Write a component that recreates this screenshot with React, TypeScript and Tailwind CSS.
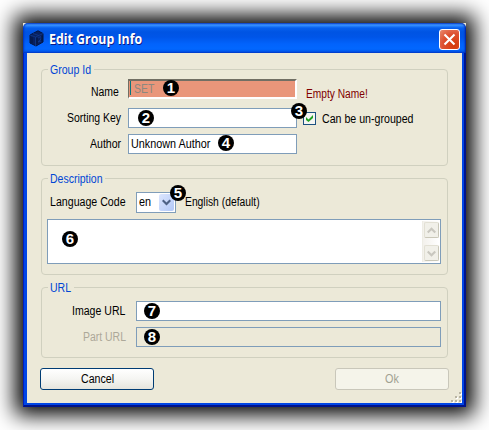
import type { ReactNode } from "react";

function T({ box, fit, children }: { box: string; fit: string; children: ReactNode }) {
  return (
    <span className={`block shrink-0 whitespace-nowrap ${box}`}>
      <span className={`inline-block origin-left whitespace-pre ${fit}`}>{children}</span>
    </span>
  );
}

function Group({ size, legend, legendBox, fit, children }: { size: string; legend: string; legendBox: string; fit: string; children: ReactNode }) {
  return (
    <section className={`relative w-[407px] rounded-[4px] border border-[#d0d0bf] ${size}`}>
      <h2 className={`absolute -top-[8px] left-[6px] h-4 bg-[#ece9d8] pl-[2px] leading-4 text-[#0046d5] ${legendBox}`}>
        <T box="w-0" fit={fit}>{legend}</T>
      </h2>
      {children}
    </section>
  );
}

function Badge({ n, at }: { n: number; at: string }) {
  return (
    <span className={`absolute flex size-4 items-center justify-center rounded-full bg-black text-[15px] leading-4 font-bold text-white ${at}`}>
      {n}
    </span>
  );
}

function Arrow({ up = false }: { up?: boolean }) {
  return (
    <span className="flex h-[16px] w-[15px] items-center justify-center rounded-[2px] border border-[#e2e0d4] border-r-[#c9c7b8] border-b-[#c9c7b8] bg-[#f1f0e9]">
      <svg width="9" height="7" viewBox="0 0 9 7" fill="none" stroke="#c9c7bf" strokeWidth="2.2">
        <path d={up ? "M.7 5.5 4.5 1.7 8.3 5.5" : "M.7 1.5 4.5 5.3 8.3 1.5"} />
      </svg>
    </span>
  );
}

export default function App() {
  return (
    <div className="h-[430px] w-[489px] overflow-hidden bg-white pt-[23px] pl-[23px] font-['Liberation_Sans',Arial,sans-serif] text-[12px] leading-5 text-black">
      <div className="relative h-[384px] w-[443px] bg-[linear-gradient(#ece9d8_6px,#0046e6_6px)] shadow-[0_0_20px_8px_#000]">
        <header className="flex h-[30px] items-center rounded-t-[5px] bg-[linear-gradient(#0a3fc6_0px,#3b94ff_2px,#2882fb_3px,#0660ee_5px,#0054e3_9px,#0055e8_14px,#0263fc_21px,#0267ff_26px,#005af0_28px,#003cc8_30px)] pl-[6px] shadow-[inset_2px_0_2px_-1px_#0031c0,inset_-2px_0_2px_-1px_#001b9a]">
          <svg width="15" height="17" viewBox="0 0 15 17" fill="#08205f" stroke="#03143f" strokeWidth="1">
            <path d="M1 5 9 .8 14 3.5V12L7 16 1 13Z" />
            <path d="M1 5 6.5 7 14 3.5M6.5 7V16M4 3.5 10 5.5M9 8 12 6.5 12 9 9 12 12 11" stroke="#103a8c" strokeWidth=".8" />
            <path d="M3 7v6M8 8v6M13 6v5" />
          </svg>
          <h1 className="ml-[5px] h-6 w-[110px] pt-[3px] font-['Open_Sans',sans-serif] text-[13.5px] leading-5 font-bold text-white [text-shadow:1px_1px_0_#0a1883]">
            <T box="w-full" fit="scale-x-[.915]">Edit Group Info</T>
          </h1>
          <button className="mt-[2px] mr-[6px] ml-auto flex size-[21px] items-center justify-center rounded-[3px] border border-white bg-[radial-gradient(circle_at_75%_80%,#d63a08,#dd5030_55%,#e98a70)]">
            <svg width="13" height="13" viewBox="0 0 13 13" stroke="#fff" strokeWidth="2.1">
              <path d="M1.5 1.5 11.5 11.5M11.5 1.5 1.5 11.5" />
            </svg>
          </button>
        </header>
        <div className="h-[354px] border-r-2 border-b-2 border-l border-[#00138c] border-l-[#001ec0] bg-[#0046e6] pl-[3px]">
          <main className="h-[350px] w-[435px] bg-[#ece9d8] pt-[16px] pl-[14px]">
            <Group size="h-[97px] pt-[9px]" legend="Group Id" legendBox="w-[46px]" fit="scale-x-[.88]">
              <div className="flex h-5">
                <div className="flex w-[86px] justify-end pt-[3px] pr-[9px]"><T box="w-[28px]" fit="scale-x-[.87]">Name</T></div>
                <div className="h-5 w-[169px] border border-t-2 border-r-2 border-b-2 border-[#716f64] border-r-white border-b-white bg-[#e9967a] pl-px text-[#8b8880]">
                  <div className="h-[14px] border-l border-[#08757c] pl-[3px] leading-[16px]"><T box="w-[20px]" fit="scale-x-[.87]">SET</T></div>
                </div>
                <div className="pt-[5px] pl-[9px] text-[#800000]"><T box="w-[62px]" fit="scale-x-[.85]">Empty Name!</T></div>
              </div>
              <div className="mt-[9px] flex h-5">
                <div className="flex w-[86px] justify-end pr-[7px]"><T box="w-[54px]" fit="scale-x-[.87]">Sorting Key</T></div>
                <div className="h-5 w-[169px] border border-[#7f9db9] bg-white" />
                <div className="mt-[4px] ml-[6px] flex size-[13px] items-center justify-center border border-[#1c5180] bg-[#f5f5f2]">
                  <svg width="7" height="7" viewBox="0 0 7 7" fill="#21a121"><path d="M0 2 2.5 4.5 7 0V3L2.5 7 0 5Z" /></svg>
                </div>
                <div className="pt-px pl-[6px]"><T box="w-[92px]" fit="scale-x-[.885]">Can be un-grouped</T></div>
              </div>
              <div className="mt-[6px] flex h-5">
                <div className="flex w-[86px] justify-end pr-[7px]"><T box="w-[31px]" fit="scale-x-[.88]">Author</T></div>
                <div className="h-5 w-[169px] border border-[#7f9db9] bg-white pl-[2px] leading-[18px]"><T box="w-[80px]" fit="scale-x-[.9]">Unknown Author</T></div>
              </div>
            </Group>

            <Group size="mt-[12px] h-[97px] pt-[13px]" legend="Description" legendBox="w-[57px]" fit="scale-x-[.875]">
              <div className="flex h-[21px]">
                <div className="flex w-[94px] justify-end pr-[10px]"><T box="w-[76px]" fit="scale-x-[.885]">Language Code</T></div>
                <div className="flex h-[21px] w-[40px] justify-between border border-[#7f9db9] bg-white pr-px pl-[2px] leading-[19px]">
                  <T box="w-[12px]" fit="scale-x-[.9]">en</T>
                  <span className="mt-px flex h-[17px] w-[15px] items-center justify-center rounded-[2px] bg-linear-to-br from-[#dce6fe] to-[#b2c8f7]">
                    <svg width="9" height="7" viewBox="0 0 9 7" fill="none" stroke="#4d6185" strokeWidth="2.2"><path d="M.7 1.2 4.5 5 8.3 1.2" /></svg>
                  </span>
                </div>
                <div className="pl-[9px]"><T box="w-[74px]" fit="scale-x-[.86]">English (default)</T></div>
              </div>
              <div className="mt-[6px] ml-[5px] flex h-[45px] w-[394px] justify-end border border-[#7f9db9] bg-white p-px">
                <div className="flex w-[17px] flex-col items-center justify-between border-l border-[#eeede5] bg-linear-to-r from-[#f3f1ec] to-white pt-px pb-px">
                  <Arrow up />
                  <Arrow />
                </div>
              </div>
            </Group>

            <Group size="mt-[12px] h-[71px] pt-[13px]" legend="URL" legendBox="w-[26px]" fit="scale-x-[.875]">
              <div className="flex h-5">
                <div className="flex w-[94px] justify-end pr-[10px]"><T box="w-[54px]" fit="scale-x-[.88]">Image URL</T></div>
                <div className="h-5 w-[305px] border border-[#7f9db9] bg-white" />
              </div>
              <div className="mt-[6px] flex h-5">
                <div className="flex w-[94px] justify-end pr-[10px] text-[#aca899]"><T box="w-[43px]" fit="scale-x-[.87]">Part URL</T></div>
                <div className="h-5 w-[305px] border border-[#7f9db9]" />
              </div>
            </Group>

            <div className="mt-[10px] -ml-px flex w-[409px] justify-between">
              <button className="flex h-[22px] w-[114px] justify-center rounded-[3px] border border-[#003c74] bg-linear-to-b from-white via-[#f5f5f2] to-[#e6e5dd] leading-5"><T box="w-[33px]" fit="scale-x-[.885]">Cancel</T></button>
              <button disabled className="flex h-[22px] w-[114px] justify-center rounded-[3px] border border-[#c9c7ba] bg-[#f5f4ea] leading-5 text-[#a1a192]"><T box="w-[14px]" fit="scale-x-[.9]">Ok</T></button>
            </div>
          </main>
        </div>

        <svg className="absolute right-[4px] bottom-[4px]" width="12" height="12" viewBox="0 0 12 12">
          {[[9, 1], [5, 5], [9, 5], [1, 9], [5, 9], [9, 9]].map(([x, y]) => (
            <g key={`${x}-${y}`}><rect x={x + 1} y={y + 1} width="2" height="2" fill="#fff" /><rect x={x} y={y} width="2" height="2" fill="#b8b4a3" /></g>
          ))}
        </svg>
        <Badge n={1} at="left-[140px] top-[57px]" />
        <Badge n={2} at="left-[115px] top-[87px]" />
        <Badge n={3} at="left-[268px] top-[80px]" />
        <Badge n={4} at="left-[195px] top-[112px]" />
        <Badge n={5} at="left-[147px] top-[162px]" />
        <Badge n={6} at="left-[39px] top-[208px]" />
        <Badge n={7} at="left-[121px] top-[280px]" />
        <Badge n={8} at="left-[121px] top-[306px]" />
      </div>
    </div>
  );
}
